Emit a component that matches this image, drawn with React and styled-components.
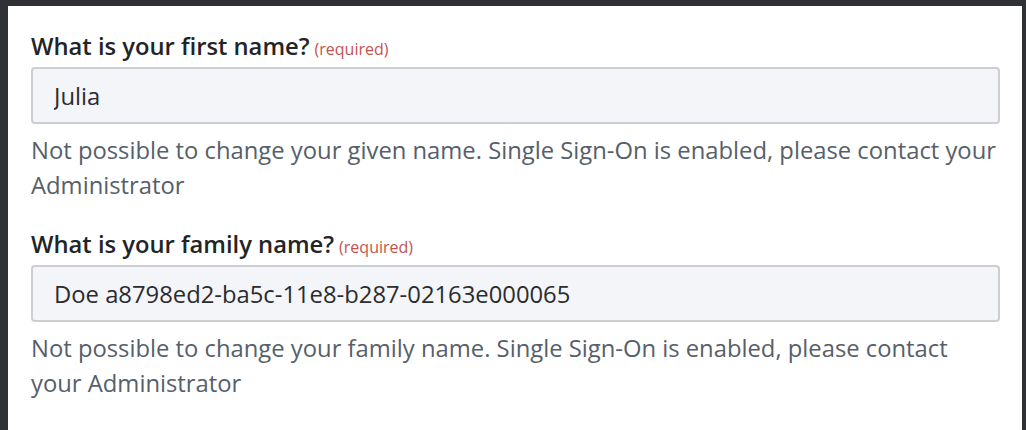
import React from 'react';
import styled, { createGlobalStyle } from 'styled-components';

const GlobalStyle = createGlobalStyle`
    html, body {
        margin: 0;
        padding: 0;
        background-color: #2f3135;
        height: 100%;
        overflow: hidden;
    }
    #root {
        height: 100%;
    }
`

const Backdrop = styled.div`
    height: 100%;
    padding: 6px 4px 0 8px;
    box-sizing: border-box;
`

const Panel = styled.div`
    height: 100%;
    background-color: #ffffff;
    padding: 25px 22px 0 23px;
    box-sizing: border-box;
    font-family: "Open Sans", "Liberation Sans", sans-serif;
`

const Field = styled.div`
    display: flex;
    flex-direction: column;
    margin-bottom: 26px;
`

const Label = styled.label`
    display: block;
    font-size: 23.75px;
    font-weight: 600;
    line-height: 30px;
    color: #222426;
    margin-bottom: 6px;
`

const Required = styled.span`
    margin-left: 5px;
    font-size: 16px;
    font-weight: 400;
    line-height: 1;
    color: #c4534e;
`

const Input = styled.input`
    height: 57px;
    box-sizing: border-box;
    padding: 0 21px;
    background-color: #f4f5f9;
    border: 2px solid #cdced1;
    border-radius: 4px;
    font-family: inherit;
    font-size: 23.8px;
    color: #2a2c2e;
    outline: none;
`

const Help = styled.p`
    margin: 9px 0 0;
    font-size: 23.8px;
    line-height: 35px;
    color: #56606a;
`

const fields = [
    {
        id: 'first',
        label: 'What is your first name?',
        value: 'Julia',
        help: 'Not possible to change your given name. Single Sign-On is enabled, please contact your Administrator',
    },
    {
        id: 'family',
        label: 'What is your family name?',
        value: 'Doe a8798ed2-ba5c-11e8-b287-02163e000065',
        help: 'Not possible to change your family name. Single Sign-On is enabled, please contact your Administrator',
    },
];

export default function App() {
    return (
        <>
            <GlobalStyle />
            <Backdrop>
                <Panel>
                    {fields.map(f => (
                        <Field key={f.id}>
                            <Label htmlFor={f.id}>
                                {f.label}
                                <Required>(required)</Required>
                            </Label>
                            <Input id={f.id} value={f.value} readOnly />
                            <Help>{f.help}</Help>
                        </Field>
                    ))}
                </Panel>
            </Backdrop>
        </>
    )
}
